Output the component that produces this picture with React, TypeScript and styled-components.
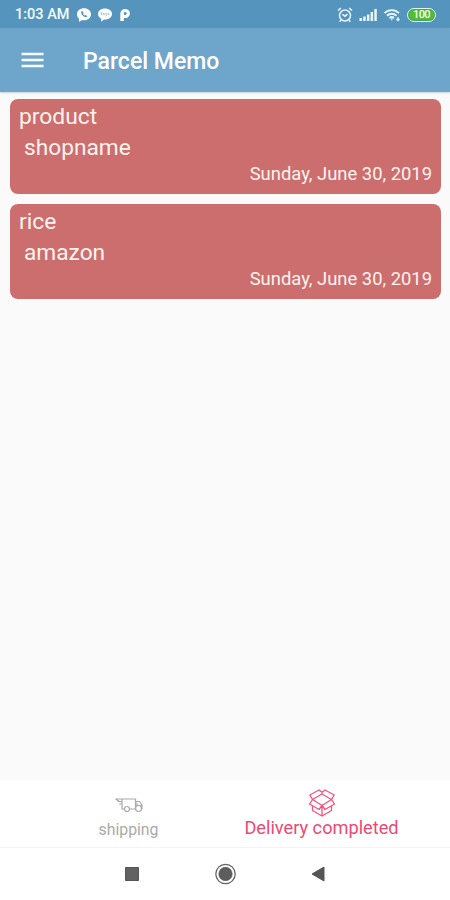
import React from 'react';
import styled, { createGlobalStyle } from 'styled-components';

const GlobalStyle = createGlobalStyle`
  * { box-sizing: border-box; }
  body { margin: 0; background: #fafafa; font-family: Roboto, "Noto Sans", sans-serif; }
`;

const Screen = styled.div`
  width: 450px;
  height: 900px;
  display: flex;
  flex-direction: column;
  overflow: hidden;
  background: #fafafa;
`;

const StatusBar = styled.header`
  height: 28px;
  flex: none;
  display: flex;
  align-items: center;
  padding: 1px 14px 0 15px;
  background: #5595bd;
  color: #f3fbff;
`;

const Clock = styled.span`
  width: 61px;
  padding-top: 1px;
  font-size: 14.5px;
  line-height: 20px;
  font-weight: 500;
  white-space: nowrap;
`;

const Notifications = styled.div`
  display: flex;
  align-items: center;
  gap: 5px;
`;

const SystemIcons = styled.div`
  display: flex;
  align-items: center;
  gap: 6px;
  margin-left: auto;
`;

const Battery = styled.span`
  width: 29px;
  height: 14px;
  display: flex;
  align-items: center;
  justify-content: center;
  border: 1.5px solid #e4f5ee;
  border-radius: 7px;
  background: #4fbd36;
  box-shadow: inset 0 0 0 1px #4b9c67;
  font-size: 11px;
  line-height: 12px;
  font-weight: 500;
  letter-spacing: -0.6px;
  color: #f5fff0;
`;

const AppBar = styled.div`
  height: 64px;
  flex: none;
  display: flex;
  align-items: center;
  padding-left: 21px;
  background: #6ea6cb;
  box-shadow: 0 1px 2px rgba(70, 120, 150, 0.3);
  z-index: 1;
`;

const MenuButton = styled.button`
  width: 62px;
  padding: 0;
  border: 0;
  background: none;
  display: flex;
  margin-top: -1px;
`;

const Title = styled.h1`
  margin: 4px 0 0;
  font-size: 23px;
  line-height: 30px;
  font-weight: 500;
  color: #fff;
`;

const ParcelList = styled.main`
  flex: 1;
  display: flex;
  flex-direction: column;
  gap: 10px;
  padding: 7px 9px 0 10px;
`;

const Card = styled.article`
  height: 95px;
  display: flex;
  flex-direction: column;
  padding: 3px 9px 0;
  border-radius: 8px;
  background: #cb6e6d;
  color: #fff3ef;
`;

const Product = styled.div`
  height: 30px;
  font-size: 22.8px;
  line-height: 30px;
`;

const Shop = styled.div`
  height: 30px;
  padding-left: 5px;
  font-size: 22.7px;
  line-height: 31px;
`;

const DateLine = styled.time`
  align-self: flex-end;
  font-size: 18.4px;
  line-height: 24px;
  white-space: nowrap;
`;

const Tabs = styled.nav`
  height: 67px;
  flex: none;
  display: grid;
  grid-template-columns: 193px 193px;
  justify-content: center;
  background: #fff;
`;

const Tab = styled.a<{ $active?: boolean }>`
  display: flex;
  flex-direction: column;
  align-items: center;
  padding-top: ${p => (p.$active ? 8 : 17)}px;
  color: ${p => (p.$active ? '#f2547d' : '#aaa')};
`;

const TabLabel = styled.span<{ $active?: boolean }>`
  font-size: ${p => (p.$active ? 18.2 : 15.8)}px;
  line-height: 22px;
  margin-top: ${p => (p.$active ? 0 : 6)}px;
  color: ${p => (p.$active ? '#ed4873' : '#aaa')};
  white-space: nowrap;
`;

const SystemNav = styled.footer`
  height: 53px;
  flex: none;
  display: grid;
  grid-template-columns: repeat(3, 93px);
  justify-content: center;
  justify-items: center;
  align-items: center;
  border-top: 1px solid #f3f3f3;
  background: #fff;
`;

const CallIcon = () => (
  <svg width="16" height="16" viewBox="0 0 16 16">
    <path d="M8 1.200c4 0 7 2.600 7 6s-3 6-7 6c-.7 0-1.300-.1-2-.2L3 15v-3.200C1.700 10.700 1 9 1 7.200c0-3.400 3-6 7-6Z" fill="#fff" />
    <path d="M5.500 4.300c-.9 1-.2 2.900 1.200 4.300s3.300 2.100 4.300 1.200l.2-.8-1.700-1-1 .6-1.500-1.500.6-1-1-1.900Z" fill="#5595bd" />
  </svg>
);

const TalkIcon = () => (
  <svg width="16" height="16" viewBox="0 0 16 16">
    <path d="M8 1.500c4.100 0 7 2.400 7 5.500s-2.900 5.500-7 5.500H7L4 14.800l.4-3C2.300 10.800 1 9.100 1 7c0-3.100 2.900-5.500 7-5.500Z" fill="#fff" />
    <path d="M3.500 5.800h2M4.500 5.800v2.500M6 8.300l.8-2.500.8 2.500M9 5.800v2.500h1M11 5.800v2.500M12.600 5.800 11.300 7l1.300 1.300" fill="none" stroke="#9cbdd1" strokeWidth=".8" />
  </svg>
);

const ParkIcon = () => (
  <svg width="14" height="16" viewBox="0 0 14 16">
    <path d="M7.300 2a4.500 4.500 0 1 1-1.500 8.700V14H2.300V6.500A4.700 4.700 0 0 1 7.300 2Z" fill="#fff" />
    <circle cx="7.200" cy="6.500" r="1.500" fill="#5595bd" />
  </svg>
);

const AlarmIcon = () => (
  <svg width="16" height="16" viewBox="0 0 16 16" fill="none" stroke="#e7f3fb" strokeWidth="1.500">
    <circle cx="8" cy="8.500" r="5.500" />
    <path d="M1 3.500 3.800 1.200M15 3.500 12.200 1.200M5.300 7.300 8 9.200l2.500-2M4 13l-1.300 1.700M12 13l1.300 1.700" />
  </svg>
);

const SignalIcon = () => (
  <svg width="18" height="14" viewBox="0 0 18 14" fill="#e9f5fc">
    <path d="M.5 10H3v3H.5ZM4.200 8.500h2.500V13H4.200ZM7.900 6.500h2.500V13H7.900ZM11.600 4h2.500v9h-2.500ZM15.300 1h2.500v12h-2.500Z" />
  </svg>
);

const WifiIcon = () => (
  <svg width="18" height="14" viewBox="0 0 18 14" fill="none" stroke="#e9f5fc" strokeWidth="1.900">
    <path d="M1.500 5.200c4-4.100 10.500-4.100 14.500 0M4 7.700c2.700-2.600 6.800-2.600 9.500 0M6.500 10.200c1.400-1.300 3.200-1.300 4.500 0" />
    <path d="m7.500 10.500 1.300 2.200 1.300-2.200Z" fill="#e9f5fc" stroke="none" />
    <path d="M15 9v3.500M13.500 11l1.500 1.500 1.500-1.500" strokeWidth="1.300" />
  </svg>
);

const MenuIcon = () => (
  <svg width="24" height="18" viewBox="0 0 24 18">
    <path d="M.5 3h22M.5 9h22M.5 15h22" stroke="#f7fcff" strokeWidth="2.400" />
  </svg>
);

const TruckIcon = () => (
  <svg width="30" height="16" viewBox="0 0 30 16" fill="none" stroke="currentColor" strokeWidth="1.200">
    <path d="M1.500 2h20v10M1.500 2l4 2.500M3.500 4.500H8M5 7h3M8 2v10h2.500M15.500 12h5.500M21.500 4.500h4L28 8v4M23 5.500v3h4.500" />
    <circle cx="13" cy="12" r="2.500" />
    <circle cx="24.500" cy="11.500" r="3" />
  </svg>
);

const BoxIcon = () => (
  <svg width="28" height="29" viewBox="0 0 28 29" fill="none" stroke="currentColor" strokeWidth="1.300" strokeLinejoin="round">
    <path d="M14 4.300 11 2 1.800 7 4.500 11.500 14 6l9.500 5.500L26.200 7 17 2l-3 2.300V6M4.500 11.500 14 17.500l9.500-6M4.500 11.500 1.500 16l9.500 5.500 3-4 3 4 9.500-5.500-3-4.500M4.500 18v4.500L14 28l9.500-5.500V18M14 17.500V28" />
  </svg>
);

const parcels = [
  { product: 'product', shop: 'shopname', date: 'Sunday, June 30, 2019' },
  { product: 'rice', shop: 'amazon', date: 'Sunday, June 30, 2019' },
];

export default function App() {
  return (
    <>
      <GlobalStyle />
      <Screen>
        <StatusBar>
          <Clock>1:03 AM</Clock>
          <Notifications><CallIcon /><TalkIcon /><ParkIcon /></Notifications>
          <SystemIcons><AlarmIcon /><SignalIcon /><WifiIcon /><Battery>100</Battery></SystemIcons>
        </StatusBar>
        <AppBar>
          <MenuButton aria-label="Menu"><MenuIcon /></MenuButton>
          <Title>Parcel Memo</Title>
        </AppBar>
        <ParcelList>
          {parcels.map(p => (
            <Card key={p.product}>
              <Product>{p.product}</Product>
              <Shop>{p.shop}</Shop>
              <DateLine>{p.date}</DateLine>
            </Card>
          ))}
        </ParcelList>
        <Tabs>
          <Tab><TruckIcon /><TabLabel>shipping</TabLabel></Tab>
          <Tab $active><BoxIcon /><TabLabel $active>Delivery completed</TabLabel></Tab>
        </Tabs>
        <SystemNav>
          <svg width="14" height="14"><path d="M.5.5h13v13H.5Z" fill="#626262" stroke="#555" /></svg>
          <svg width="22" height="22" viewBox="0 0 22 22">
            <circle cx="11.500" cy="11" r="9.700" fill="none" stroke="#666" strokeWidth="1.300" />
            <circle cx="11.500" cy="11" r="6.700" fill="#5d5d5d" stroke="#4c4c4c" strokeWidth=".6" />
          </svg>
          <svg width="14" height="16"><path d="M13 1v14L1 8Z" fill="#555" stroke="#555" /></svg>
        </SystemNav>
      </Screen>
    </>
  );
}
